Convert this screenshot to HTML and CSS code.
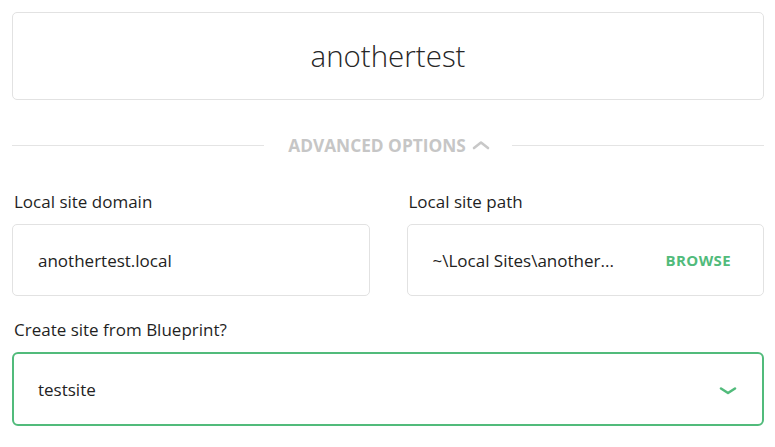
FILE: index.html
```html
<!DOCTYPE html>
<html>
<head>
<meta charset="utf-8">
<link rel="stylesheet" href="styles.css">
</head>
<body>
<div class="page">
  <div class="name-box">anothertest</div>
  <div class="divider">
    <span class="line"></span>
    <span class="divider-label">ADVANCED OPTIONS
      <svg class="chev-up" width="18" height="10" viewBox="0 0 18 10"><path d="M2 8 L9 2.5 L16 8" fill="none" stroke="#c8c8c8" stroke-width="2.6" stroke-linecap="round" stroke-linejoin="round"/></svg>
    </span>
    <span class="line"></span>
  </div>
  <div class="row">
    <div class="field">
      <div class="label">Local site domain</div>
      <div class="input">anothertest.local</div>
    </div>
    <div class="field">
      <div class="label">Local site path</div>
      <div class="input input-path"><span class="path">~\Local Sites\another...</span><span class="browse">BROWSE</span></div>
    </div>
  </div>
  <div class="field full">
    <div class="label">Create site from Blueprint?</div>
    <div class="select"><span>testsite</span>
      <svg class="chev-down" width="18" height="10" viewBox="0 0 18 10"><path d="M2 2.5 L9 7 L16 2.5" fill="none" stroke="#51bb7b" stroke-width="2.6" stroke-linecap="round" stroke-linejoin="round"/></svg>
    </div>
  </div>
</div>
</body>
</html>
```
FILE: styles.css
```css
html, body {
  margin: 0;
  padding: 0;
  background: #ffffff;
}
body {
  font-family: "Open Sans", Lato, "Liberation Sans", sans-serif;
  color: #222222;
}
.page {
  padding: 12px 11px 0 12px;
}
.name-box {
  height: 86px;
  box-sizing: content-box;
  border: 1px solid #e2e2e2;
  border-radius: 5px;
  display: flex;
  align-items: center;
  justify-content: center;
  font-size: 29.5px;
  font-weight: 300;
  color: #262626;
  padding-bottom: 0;
  line-height: 1;
}
.name-box::after {
  content: "";
  display: block;
  height: 0;
}
.divider {
  display: flex;
  align-items: center;
  margin-top: 31px;
  height: 28px;
}
.line {
  flex: 1;
  height: 1px;
  background: #e4e4e4;
}
.divider-label {
  padding: 0 22px 0 24px;
  font-size: 17.3px;
  font-weight: 700;
  color: #c6c6c6;
  display: flex;
  align-items: center;
  gap: 6px;
}
.row {
  display: flex;
  gap: 37px;
  margin-top: 30px;
}
.field {
  flex: 1;
}
.label {
  font-size: 17px;
  color: #1f1f1f;
  padding-left: 2px;
  height: 26px;
  line-height: 26px;
  margin-bottom: 9px;
}
.input {
  height: 70px;
  border: 1px solid #e2e2e2;
  border-radius: 5px;
  display: flex;
  align-items: center;
  padding: 0 25px;
  font-size: 17px;
  color: #222;
}
.input-path {
  justify-content: space-between;
  padding-right: 32px;
}
.browse {
  font-size: 15px;
  font-weight: 700;
  color: #51bb7b;
  letter-spacing: 0.4px;
}
.full {
  margin-top: 21px;
}
.select {
  height: 70px;
  border: 2px solid #51bb7b;
  border-radius: 6px;
  display: flex;
  align-items: center;
  justify-content: space-between;
  padding: 0 25px 0 24px;
  font-size: 17px;
  color: #222;
}
.chev-down {
  margin-top: 3px;
}
```
